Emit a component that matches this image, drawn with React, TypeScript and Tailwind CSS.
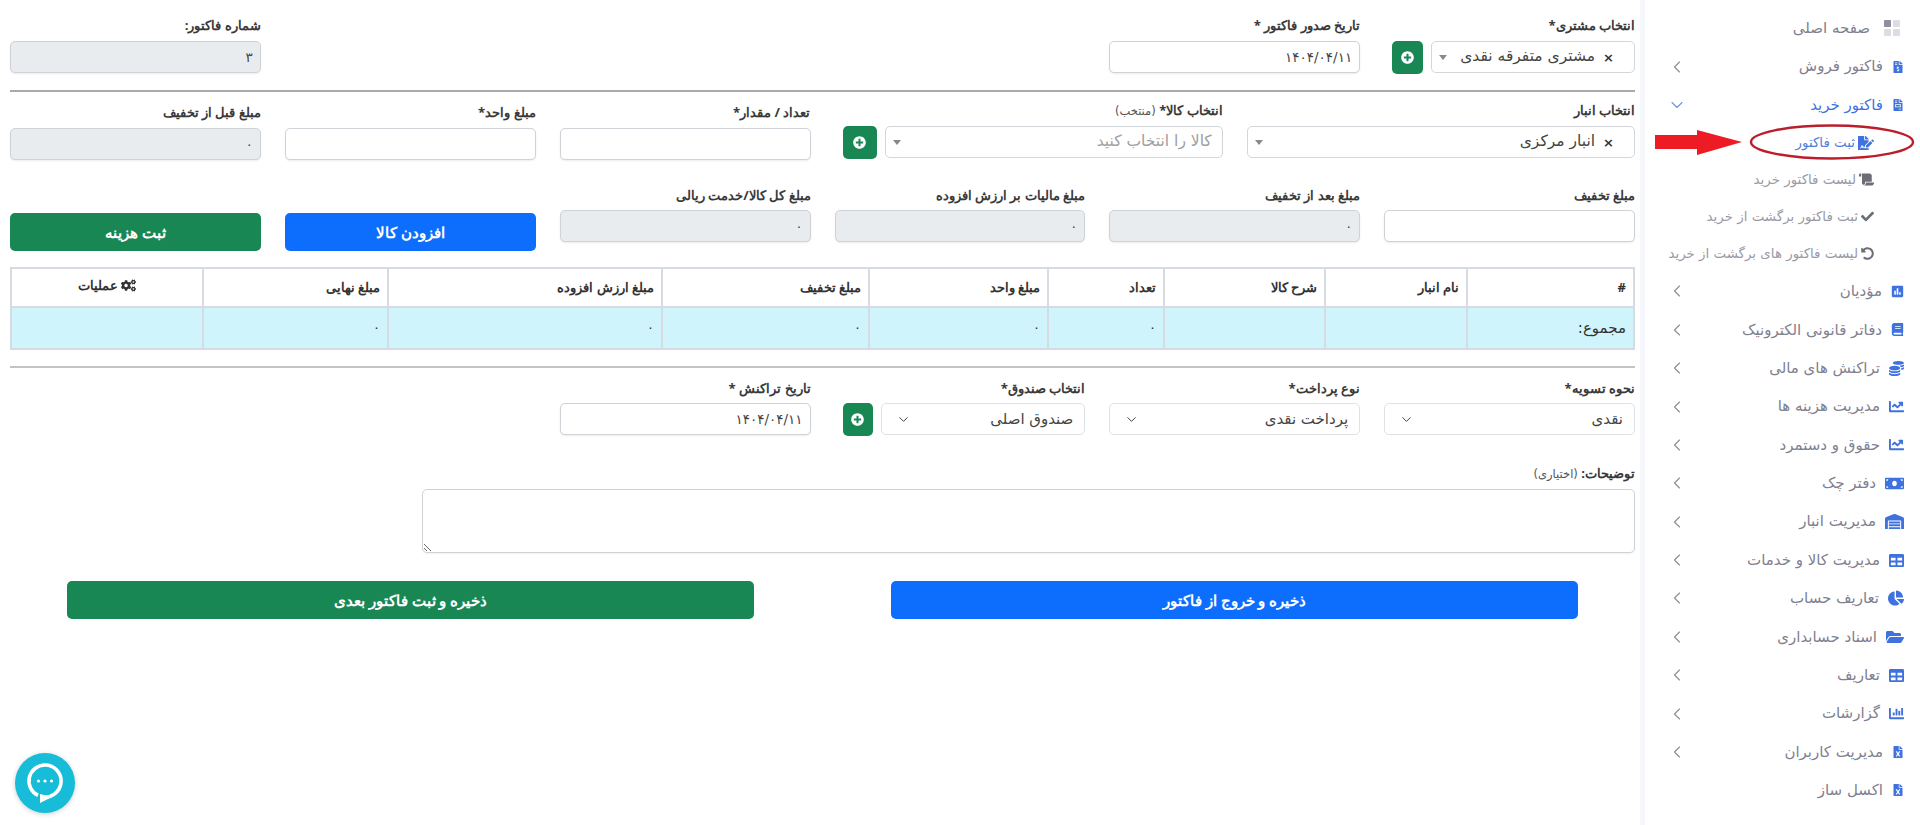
import { ChevronDown, ChevronLeft } from 'lucide-react';
import type { ReactNode } from 'react';
import {
  FaBook,
  FaChartBar,
  FaChartLine,
  FaChartPie,
  FaCheck,
  FaCogs,
  FaCoins,
  FaFileExcel,
  FaFileInvoice,
  FaFileInvoiceDollar,
  FaFileSignature,
  FaFolderOpen,
  FaMoneyBill,
  FaPlusCircle,
  FaPoll,
  FaScroll,
  FaTable,
  FaUndoAlt,
  FaWarehouse,
} from 'react-icons/fa';

const sideItems = [
  { label: 'مؤدیان', icon: <FaPoll className="h-auto w-[13px]" /> },
  { label: 'دفاتر قانونی الکترونیک', icon: <FaBook className="h-auto w-[13px]" /> },
  { label: 'تراکنش های مالی', icon: <FaCoins className="h-auto w-[15px]" /> },
  { label: 'مدیریت هزینه ها', icon: <FaChartLine className="h-auto w-[15px]" /> },
  { label: 'حقوق و دستمرد', icon: <FaChartLine className="h-auto w-[15px]" /> },
  { label: 'دفتر چک', icon: <FaMoneyBill className="h-auto w-[19px]" /> },
  { label: 'مدیریت انبار', icon: <FaWarehouse className="h-auto w-[19px]" /> },
  { label: 'مدیریت کالا و خدمات', icon: <FaTable className="h-auto w-[15px]" /> },
  { label: 'تعاریف حساب', icon: <FaChartPie className="h-auto w-[16px]" /> },
  { label: 'اسناد حسابداری', icon: <FaFolderOpen className="h-auto w-[18px]" /> },
  { label: 'تعاریف', icon: <FaTable className="h-auto w-[15px]" /> },
  { label: 'گزارشات', icon: <FaChartBar className="h-auto w-[15px]" /> },
  { label: 'مدیریت کاربران', icon: <FaFileExcel className="h-auto w-[12px]" /> },
];

const subItems = [
  { label: 'لیست فاکتور خرید', icon: <FaScroll size={15} /> },
  { label: 'ثبت فاکتور برگشت از خرید', icon: <FaCheck size={13} /> },
  { label: 'لیست فاکتور های برگشت از خرید', icon: <FaUndoAlt size={13} /> },
];

const headers = [
  { label: '#', w: 'w-[167px]' },
  { label: 'نام انبار', w: 'w-[142px]' },
  { label: 'شرح کالا', w: 'w-[161px]' },
  { label: 'تعداد', w: 'w-[116px]' },
  { label: 'مبلغ واحد', w: 'w-[179px]' },
  { label: 'مبلغ تخفیف', w: 'w-[207px]' },
  { label: 'مبلغ ارزش افزوده', w: 'w-[274px]' },
  { label: 'مبلغ نهایی', w: 'w-[185px]' },
];

function SideRow({ label, icon, chevron = true }: { label: string; icon: ReactNode; chevron?: boolean }) {
  return (
    <div className="flex h-[38.4px] items-center pr-4 pl-[22px] text-[15px] text-[#80808f]">
      <span className="shrink-0 text-[#3f72de]">{icon}</span>
      <span className="mr-[9px] flex-1">{label}</span>
      {chevron && <ChevronLeft size={20} strokeWidth={1.3} className="text-[#8b8b95]" />}
    </div>
  );
}

function SubRow({ label, icon }: { label: string; icon: ReactNode }) {
  return (
    <div className="flex h-[37px] items-center pr-[46px] text-[13.4px] whitespace-nowrap text-[#9a9aa6]">
      <span className="text-[#6d6d78]">{icon}</span>
      <span className="mr-[3px]">{label}</span>
    </div>
  );
}

function Sidebar() {
  return (
    <aside className="relative w-[275px] shrink-0 bg-white pt-[9px]">
      <div className="flex h-[38.4px] items-center pr-5 text-[15px] text-[#80808f]">
        <svg width="16" height="16" viewBox="0 0 16 16" className="shrink-0">
          <rect x="0" y="0" width="7" height="7" rx="1" fill="#8e8e9e" />
          <rect x="9" y="0" width="7" height="7" rx="1" fill="#dcdce2" />
          <rect x="0" y="9" width="7" height="7" rx="1" fill="#dcdce2" />
          <rect x="9" y="9" width="7" height="7" rx="1" fill="#dcdce2" />
        </svg>
        <span className="mr-[14px]">صفحه اصلی</span>
      </div>
      <SideRow label="فاکتور فروش" icon={<FaFileInvoiceDollar className="h-auto w-[12px]" />} />
      <div className="flex h-[38.4px] items-center pr-4 pl-[22px] text-[15px] text-[#3f72de]">
        <FaFileInvoice className="h-auto w-[12px] shrink-0" />
        <span className="mr-[9px] flex-1">فاکتور خرید</span>
        <ChevronDown size={20} strokeWidth={1.3} className="text-[#6f93dc]" />
      </div>
      <div className="flex h-[37px] items-center pr-[46px] text-[13.4px] text-[#4f7fd8]">
        <FaFileSignature size={16} className="text-[#3f72de]" />
        <span className="mr-[3px]">ثبت فاکتور</span>
      </div>
      {subItems.map((item) => (
        <SubRow key={item.label} label={item.label} icon={item.icon} />
      ))}
      {sideItems.map((item) => (
        <SideRow key={item.label} label={item.label} icon={item.icon} />
      ))}
      <SideRow label="اکسل ساز" icon={<FaFileExcel className="h-auto w-[12px]" />} chevron={false} />

      {/* red annotation drawn on top of the menu */}
      <svg width="262" height="40" viewBox="0 0 262 40" className="absolute top-[122px] left-[9px]">
        <polygon points="1,13 43,13 43,8 88,20 43,33 43,27 1,27" fill="#ed1c24" />
        <ellipse cx="178" cy="20" rx="81" ry="16.5" fill="none" stroke="#bb1e2a" strokeWidth="2.4" />
      </svg>
    </aside>
  );
}

function Label({ children, mb = 'mb-[5px]' }: { children: ReactNode; mb?: string }) {
  return (
    <div className={`h-5 font-['Noto_Sans',sans-serif] text-[13.2px] leading-5 font-bold whitespace-nowrap text-[#3a3a3a] ${mb}`}>
      {children}
    </div>
  );
}

function Note({ children }: { children: ReactNode }) {
  return <span className="font-['DejaVu_Sans',sans-serif] text-[11.5px] font-normal text-[#555]">{children}</span>;
}

function TextField({ value = '', disabled = false, small = false }: { value?: string; disabled?: boolean; small?: boolean }) {
  return (
    <input
      readOnly
      value={value}
      className={`h-[32px] w-full rounded-[5px] border border-[#cfd2d6] px-[7px] text-right shadow-[0_1px_2px_rgba(0,0,0,0.08)] outline-none ${
        small ? 'text-[13px]' : 'text-[13.5px]'
      } text-[#444] ${disabled ? 'bg-[#e9ecef]' : 'bg-white'}`}
    />
  );
}

function AddButton({ w }: { w: string }) {
  return (
    <div className={`flex h-[33px] shrink-0 items-center justify-center rounded-[5px] bg-[#198754] text-white ${w}`}>
      <FaPlusCircle size={13} />
    </div>
  );
}

function ComboBox({ value, placeholder }: { value?: string; placeholder?: string }) {
  return (
    <div className="flex h-[32px] min-w-0 flex-1 items-center rounded-[5px] border border-[#d3d6da] bg-white pr-[20px] pl-[7px] text-[15.5px]">
      {value && <span className="ml-[8px] text-[13px] leading-none font-bold text-[#333]">×</span>}
      <span className={`flex-1 whitespace-nowrap ${value ? 'text-[#444]' : '-mr-[10px] text-[#a0a0a0]'}`}>{value ?? placeholder}</span>
      <span className="h-0 w-0 border-x-[4px] border-t-[5px] border-x-transparent border-t-[#888]" />
    </div>
  );
}

function NativeSelect({ value }: { value: string }) {
  return (
    <div className="flex h-[32px] min-w-0 flex-1 items-center justify-between rounded-[5px] border border-[#dfe2e5] bg-white pr-[11px] pl-[14px] text-[15px] whitespace-nowrap text-[#444]">
      <span>{value}</span>
      <ChevronDown size={15} strokeWidth={1.6} className="text-[#444]" />
    </div>
  );
}

function ChatBubble() {
  return (
    <div className="absolute top-[753px] left-[15px] flex h-[60px] w-[60px] items-center justify-center rounded-full bg-[#16bcd8] shadow-[0_1px_5px_rgba(0,0,0,0.2)]">
      <svg width="38" height="42" viewBox="0 0 38 42">
        <path d="M19 3a16 16 0 1 1-3 31.7" fill="none" stroke="#fff" strokeWidth="3.6" />
        <path d="M19 3a16 16 0 0 0-7 30.4" fill="none" stroke="#fff" strokeWidth="3.6" />
        <path d="M14 32v9l12-6z" fill="#fff" />
        <circle cx="12.5" cy="19" r="1.6" fill="#fff" />
        <circle cx="19" cy="19" r="1.6" fill="#fff" />
        <circle cx="25.5" cy="19" r="1.6" fill="#fff" />
      </svg>
    </div>
  );
}

export default function App() {
  return (
    <div dir="rtl" className="relative flex h-[825px] overflow-hidden bg-[#f5f7fb] font-['DejaVu_Sans',sans-serif]">
      <Sidebar />
      <main className="mr-[5px] h-full min-w-0 flex-1 bg-white pt-[15px] pr-[5px] pl-[10px]">
        {/* invoice header */}
        <div className="grid grid-cols-12 gap-x-6">
          <div className="col-span-2">
            <Label mb="mb-[6px]">انتخاب مشتری*</Label>
            <div className="flex items-start gap-2 pl-2">
              <ComboBox value="مشتری متفرقه نقدی" />
              <AddButton w="w-[31px]" />
            </div>
          </div>
          <div className="col-span-2">
            <Label mb="mb-[6px]">تاریخ صدور فاکتور *</Label>
            <TextField value="۱۴۰۴/۰۴/۱۱" />
          </div>
          <div className="col-span-6" />
          <div className="col-span-2">
            <Label mb="mb-[6px]">شماره فاکتور:</Label>
            <TextField value="۳" disabled />
          </div>
        </div>

        <hr className="mt-4 border-t-2 border-[#a9a9a9]" />

        {/* item entry */}
        <div className="mt-2 grid grid-cols-12 gap-x-6">
          <div className="col-span-3">
            <Label mb="mb-[6px]">انتخاب انبار</Label>
            <ComboBox value="انبار مرکزی" />
          </div>
          <div className="col-span-3">
            <Label mb="mb-[6px]">
              انتخاب کالا* <Note>(منتخب)</Note>
            </Label>
            <div className="flex items-start gap-2 pl-2">
              <ComboBox placeholder="کالا را انتخاب کنید" />
              <AddButton w="w-[34px]" />
            </div>
          </div>
          <div className="col-span-2 pt-[2px]">
            <Label mb="mb-[6px]">تعداد / مقدار*</Label>
            <TextField />
          </div>
          <div className="col-span-2 pt-[2px]">
            <Label mb="mb-[6px]">مبلغ واحد*</Label>
            <TextField />
          </div>
          <div className="col-span-2 pt-[2px]">
            <Label mb="mb-[6px]">مبلغ قبل از تخفیف</Label>
            <TextField value="۰" disabled small />
          </div>
        </div>

        <div className="mt-[25px] grid grid-cols-12 gap-x-6">
          <div className="col-span-2">
            <Label>مبلغ تخفیف</Label>
            <TextField />
          </div>
          <div className="col-span-2">
            <Label>مبلغ بعد از تخفیف</Label>
            <TextField value="۰" disabled small />
          </div>
          <div className="col-span-2">
            <Label>مبلغ مالیات بر ارزش افزوده</Label>
            <TextField value="۰" disabled small />
          </div>
          <div className="col-span-2">
            <Label>مبلغ کل کالا/خدمت ریالی</Label>
            <TextField value="۰" disabled small />
          </div>
          <div className="col-span-2 pt-[28px]">
            <div className="flex h-[38px] items-center justify-center rounded-[5px] bg-[#0d6efd] font-['Noto_Sans',sans-serif] text-[15px] font-bold text-white">
              افزودن کالا
            </div>
          </div>
          <div className="col-span-2 pt-[28px]">
            <div className="flex h-[38px] items-center justify-center rounded-[5px] bg-[#198754] font-['Noto_Sans',sans-serif] text-[15px] font-bold text-white">
              ثبت هزینه
            </div>
          </div>
        </div>

        {/* items table */}
        <table className="mt-4 w-full table-fixed border-collapse font-['Noto_Sans',sans-serif] text-[13px] text-[#333]">
          <thead>
            <tr className="h-[39px] bg-white">
              {headers.map((h) => (
                <th key={h.label} className={`border-2 border-[#d6dae1] px-[7px] text-right font-bold ${h.w}`}>
                  {h.label}
                </th>
              ))}
              <th className="border-2 border-[#d6dae1] px-[7px] text-center font-bold">
                <span className="inline-flex items-center gap-[3px]">
                  <FaCogs size={15} />
                  عملیات
                </span>
              </th>
            </tr>
          </thead>
          <tbody>
            <tr className="h-[42px] bg-[#cff4fc] font-['DejaVu_Sans',sans-serif] text-[13px]">
              <td className="border-2 border-[#d6dae1] px-[7px] text-[15px]">مجموع:</td>
              <td className="border-2 border-[#d6dae1]" />
              <td className="border-2 border-[#d6dae1]" />
              <td className="border-2 border-[#d6dae1] px-[7px]">۰</td>
              <td className="border-2 border-[#d6dae1] px-[7px]">۰</td>
              <td className="border-2 border-[#d6dae1] px-[7px]">۰</td>
              <td className="border-2 border-[#d6dae1] px-[7px]">۰</td>
              <td className="border-2 border-[#d6dae1] px-[7px]">۰</td>
              <td className="border-2 border-[#d6dae1]" />
            </tr>
          </tbody>
        </table>

        <hr className="mt-4 border-t-2 border-[#c4c4c4]" />

        {/* settlement */}
        <div className="mt-[10px] grid grid-cols-12 gap-x-6">
          <div className="col-span-2">
            <Label>نحوه تسویه*</Label>
            <NativeSelect value="نقدی" />
          </div>
          <div className="col-span-2">
            <Label>نوع پرداخت*</Label>
            <NativeSelect value="پرداخت نقدی" />
          </div>
          <div className="col-span-2">
            <Label>انتخاب صندوق*</Label>
            <div className="flex items-start gap-2 pl-2">
              <NativeSelect value="صندوق اصلی" />
              <AddButton w="w-[30px]" />
            </div>
          </div>
          <div className="col-span-2">
            <Label>تاریخ تراکنش *</Label>
            <TextField value="۱۴۰۴/۰۴/۱۱" />
          </div>
        </div>

        <div className="mt-[27px]">
          <Label mb="mb-[6px]">
            توضیحات: <Note>(اختیاری)</Note>
          </Label>
          <textarea readOnly className="block h-[64px] w-[1213px] rounded-[5px] border border-[#cfd2d6] bg-white shadow-[0_1px_2px_rgba(0,0,0,0.06)] outline-none" />
        </div>

        <div className="mt-[28px] flex">
          <div className="mr-[57px] flex h-[38px] w-[687px] items-center justify-center rounded-[5px] bg-[#0d6efd] font-['Noto_Sans',sans-serif] text-[15px] font-bold text-white">
            ذخیره و خروج از فاکتور
          </div>
          <div className="mr-[137px] flex h-[38px] w-[687px] items-center justify-center rounded-[5px] bg-[#198754] font-['Noto_Sans',sans-serif] text-[15px] font-bold text-white">
            ذخیره و ثبت فاکتور بعدی
          </div>
        </div>
      </main>
      <ChatBubble />
    </div>
  );
}
